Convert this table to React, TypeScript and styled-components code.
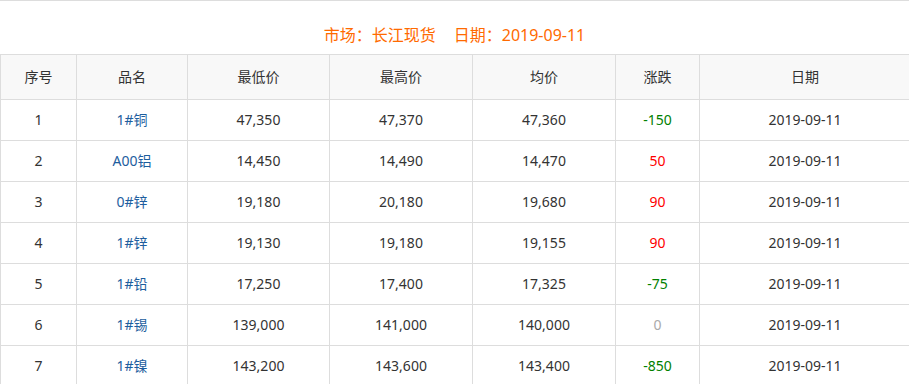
import React from 'react';
import styled, { createGlobalStyle } from 'styled-components';

type Row = {
  id: number;
  name: string;
  low: string;
  high: string;
  avg: string;
  change: number;
  date: string;
};

const rows: Row[] = [
  { id: 1, name: '1#铜', low: '47,350', high: '47,370', avg: '47,360', change: -150, date: '2019-09-11' },
  { id: 2, name: 'A00铝', low: '14,450', high: '14,490', avg: '14,470', change: 50, date: '2019-09-11' },
  { id: 3, name: '0#锌', low: '19,180', high: '20,180', avg: '19,680', change: 90, date: '2019-09-11' },
  { id: 4, name: '1#锌', low: '19,130', high: '19,180', avg: '19,155', change: 90, date: '2019-09-11' },
  { id: 5, name: '1#铅', low: '17,250', high: '17,400', avg: '17,325', change: -75, date: '2019-09-11' },
  { id: 6, name: '1#锡', low: '139,000', high: '141,000', avg: '140,000', change: 0, date: '2019-09-11' },
  { id: 7, name: '1#镍', low: '143,200', high: '143,600', avg: '143,400', change: -850, date: '2019-09-11' },
];

const GlobalStyle = createGlobalStyle`
  body {
    margin: 0;
    background: #fff;
    overflow: hidden;
    font-family: "Noto Sans", "Noto Sans CJK SC", sans-serif;
  }
`;

const Panel = styled.div`
  border-top: 1px solid #ddd;
  width: 909px;
  overflow: hidden;
`;

const Title = styled.h2`
  margin: 0 0 8px;
  padding-top: 23px;
  font-size: 16px;
  line-height: 22px;
  font-weight: normal;
  color: #ff6a00;
  text-align: center;
`;

const TitlePart = styled.span`
  & + & {
    margin-left: 18px;
  }
`;

const Table = styled.table`
  width: 910px;
  border-collapse: collapse;
  table-layout: fixed;
  font-size: 14px;
  color: #333;
`;

const Th = styled.th`
  height: 42px;
  padding: 0 0 2px;
  border: 1px solid #ddd;
  background: #f8f8f8;
  font-weight: normal;
  text-align: center;
`;

const Td = styled.td`
  height: 38px;
  padding: 0 0 2px;
  border: 1px solid #ddd;
  text-align: center;
`;

const NameCell = styled(Td)`
  color: #1d5e9e;
`;

const ChangeCell = styled(Td)<{ $dir: number }>`
  color: ${({ $dir }) => ($dir > 0 ? '#ff0000' : $dir < 0 ? '#008000' : '#aaa')};
`;

const widths = [76, 111, 142, 143, 143, 84, 211];
const heads = ['序号', '品名', '最低价', '最高价', '均价', '涨跌', '日期'];

export default function App() {
  return (
    <>
      <GlobalStyle />
      <Panel>
        <Title>
          <TitlePart>市场：长江现货</TitlePart>
          <TitlePart>日期：2019-09-11</TitlePart>
        </Title>
        <Table>
          <colgroup>
            {widths.map((w, i) => (
              <col key={i} style={{ width: w }} />
            ))}
          </colgroup>
          <thead>
            <tr>
              {heads.map((h) => (
                <Th key={h}>{h}</Th>
              ))}
            </tr>
          </thead>
          <tbody>
            {rows.map((r) => (
              <tr key={r.id}>
                <Td>{r.id}</Td>
                <NameCell>{r.name}</NameCell>
                <Td>{r.low}</Td>
                <Td>{r.high}</Td>
                <Td>{r.avg}</Td>
                <ChangeCell $dir={r.change}>{r.change}</ChangeCell>
                <Td>{r.date}</Td>
              </tr>
            ))}
          </tbody>
        </Table>
      </Panel>
    </>
  );
}
